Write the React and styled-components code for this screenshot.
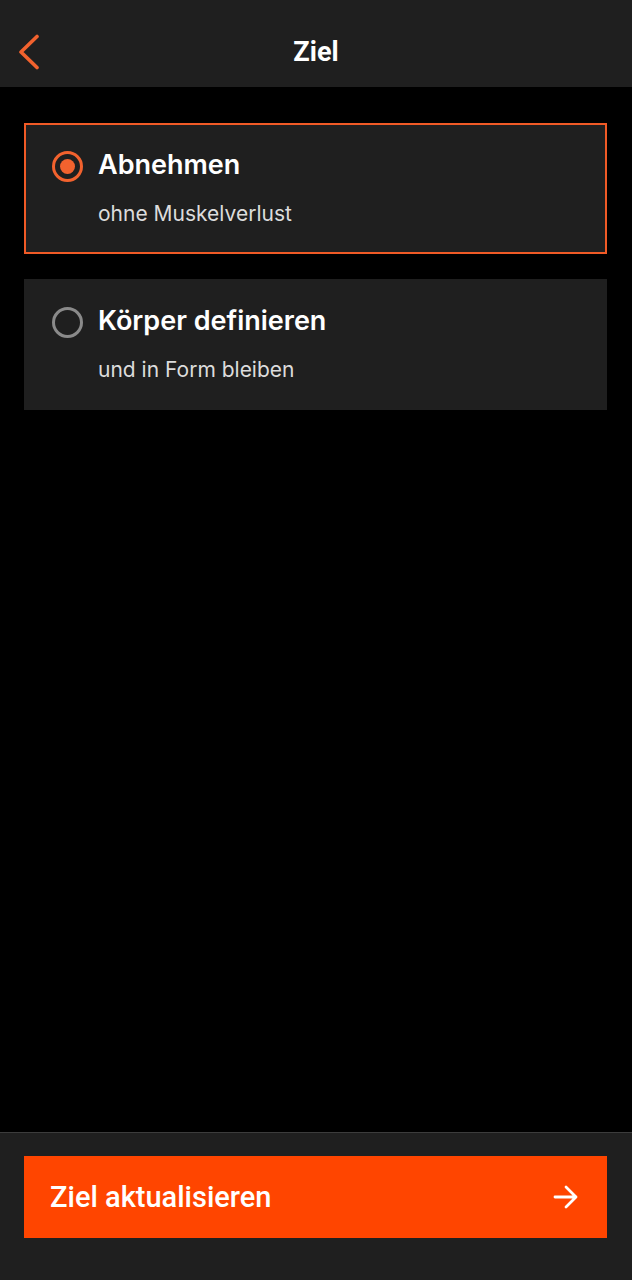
import React, { useState } from "react";
import styled, { createGlobalStyle } from "styled-components";

const GlobalStyle = createGlobalStyle`
  html, body {
    margin: 0;
    padding: 0;
    background: #000000;
  }
  * { box-sizing: border-box; }
`;

const Screen = styled.div`
  width: 632px;
  height: 1280px;
  display: flex;
  flex-direction: column;
  background: #000000;
  font-family: Inter, "Noto Sans", sans-serif;
`;

const Header = styled.div`
  height: 87px;
  flex-shrink: 0;
  background: #1f1f1f;
  display: grid;
  grid-template-columns: 60px 1fr 60px;
  align-items: center;
  padding-top: 16px;
`;

const BackButton = styled.button`
  background: none;
  border: none;
  padding: 0 0 0 17px;
  display: flex;
  align-items: center;
  cursor: pointer;
`;

const Title = styled.h1`
  margin: 0;
  text-align: center;
  color: #ffffff;
  font-family: Roboto, "Liberation Sans", sans-serif;
  font-weight: 700;
  font-size: 27px;
`;

const Options = styled.div`
  flex: 1;
  display: flex;
  flex-direction: column;
  gap: 25px;
  padding: 36px 25px 0 24px;
`;

const Card = styled.div`
  height: 131px;
  background: #1f1f1f;
  border: 2px solid ${p => (p.$active ? "#f05a26" : "#1f1f1f")};
  display: flex;
  align-items: flex-start;
  padding: 24px 26px 0 26px;
  gap: 15px;
  cursor: pointer;
`;

const Radio = styled.div`
  width: 31px;
  height: 31px;
  border-radius: 50%;
  flex-shrink: 0;
  margin-top: 2px;
  border: 3px solid ${p => (p.$active ? "#f2622e" : "#8a8a8a")};
  display: flex;
  align-items: center;
  justify-content: center;

  &::after {
    content: "";
    width: 15px;
    height: 15px;
    border-radius: 50%;
    background: ${p => (p.$active ? "#f2622e" : "transparent")};
  }
`;

const Texts = styled.div`
  display: flex;
  flex-direction: column;
`;

const OptionTitle = styled.div`
  color: #ffffff;
  font-weight: 600;
  font-size: 27px;
  line-height: 32px;
`;

const OptionSub = styled.div`
  color: #dcdcdc;
  font-size: 21px;
  line-height: 26px;
  margin-top: 20px;
`;

const Footer = styled.div`
  height: 148px;
  flex-shrink: 0;
  background: #1f1f1f;
  border-top: 1px solid #3c3c3c;
  padding: 23px 25px 0 24px;
`;

const PrimaryButton = styled.button`
  width: 100%;
  height: 82px;
  border: none;
  background: #ff4500;
  color: #ffffff;
  display: flex;
  align-items: center;
  justify-content: space-between;
  padding: 0 28px 0 26px;
  font-family: Roboto, "Liberation Sans", sans-serif;
  font-weight: 500;
  font-size: 29px;
  cursor: pointer;
`;

const options = [
  { id: "lose", title: "Abnehmen", sub: "ohne Muskelverlust" },
  { id: "define", title: "Körper definieren", sub: "und in Form bleiben" },
];

export default function App() {
  const [selected, setSelected] = useState("lose");

  return (
    <Screen>
      <GlobalStyle />
      <Header>
        <BackButton aria-label="Zurück">
          <svg width="24" height="36" viewBox="0 0 24 36" fill="none">
            <path d="M20 2.5 L4 18 L20 33.5" stroke="#f2622e" strokeWidth="3.6" strokeLinecap="round" strokeLinejoin="round" />
          </svg>
        </BackButton>
        <Title>Ziel</Title>
        <div />
      </Header>

      <Options>
        {options.map(o => (
          <Card key={o.id} $active={selected === o.id} onClick={() => setSelected(o.id)}>
            <Radio $active={selected === o.id} />
            <Texts>
              <OptionTitle>{o.title}</OptionTitle>
              <OptionSub>{o.sub}</OptionSub>
            </Texts>
          </Card>
        ))}
      </Options>

      <Footer>
        <PrimaryButton>
          <span>Ziel aktualisieren</span>
          <svg width="26" height="24" viewBox="0 0 26 24" fill="none">
            <path d="M2 12 H23 M13 2 L23 12 L13 22" stroke="#ffffff" strokeWidth="2.8" strokeLinecap="round" strokeLinejoin="round" />
          </svg>
        </PrimaryButton>
      </Footer>
    </Screen>
  );
}
